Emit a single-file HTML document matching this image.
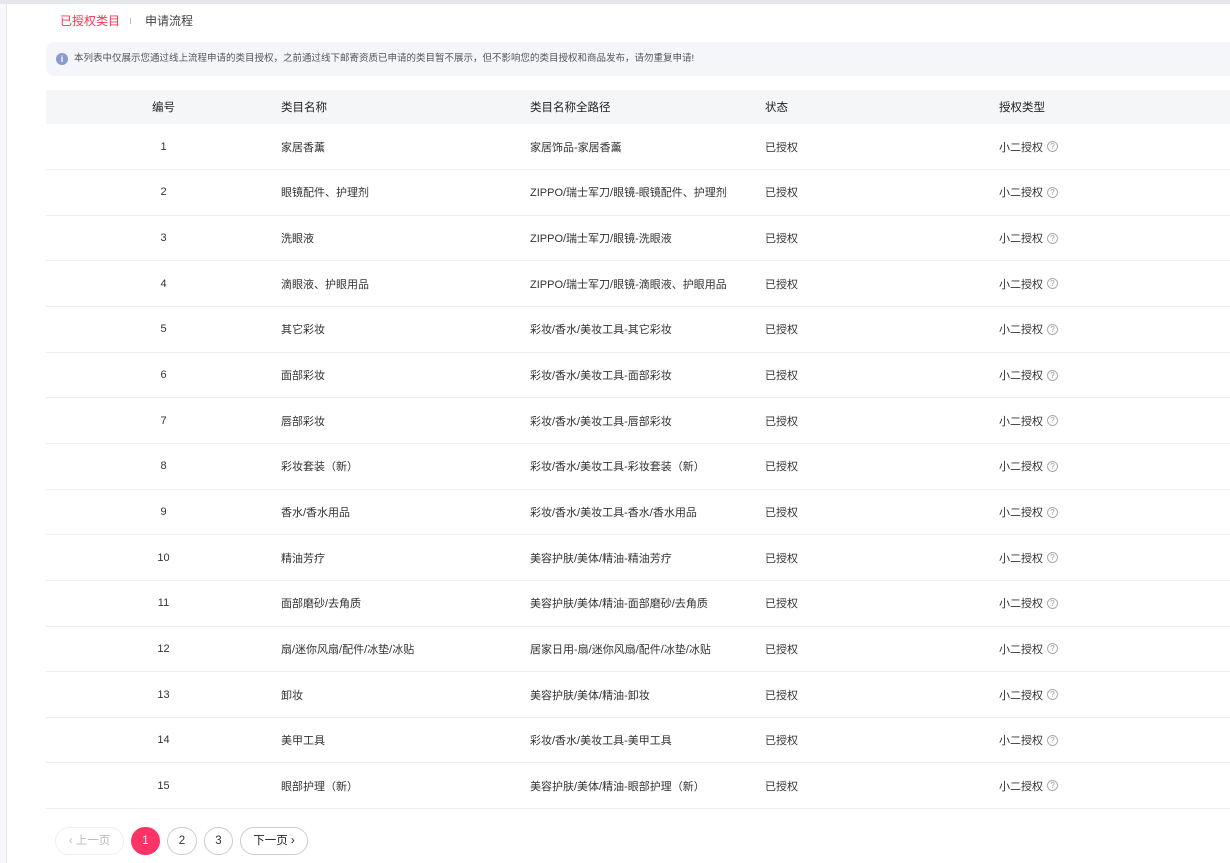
<!DOCTYPE html>
<html><head><meta charset="utf-8"><style>
*{margin:0;padding:0;box-sizing:border-box}
body{width:1230px;height:863px;overflow:hidden;background:#fff;font-family:"Liberation Sans","Noto Sans CJK SC",sans-serif;color:#333;font-size:12px;position:relative}
.topline{position:absolute;left:0;top:0;width:1230px;height:4px;background:#e6e7eb}
.leftline{position:absolute;left:0;top:4px;width:7px;height:859px;background:#f7f8fa;border-right:1px solid #e6e8ee}
.tab{position:absolute;top:13px;font-size:12px;line-height:16px}
.notice{position:absolute;left:46px;top:42px;width:1190px;height:34px;background:#f5f6fa;border-radius:8px;font-size:9.5px;color:#555;line-height:34px;padding-left:28px}
.notice i{position:absolute;left:10px;top:11px;width:12px;height:12px;border-radius:50%;background:#8a9bd0;color:#fff;font-style:normal;font-size:9px;line-height:12px;text-align:center;font-weight:bold}
table{position:absolute;left:46px;top:90px;width:1190px;border-collapse:collapse}
th{background:#f5f6f8;height:34px;font-weight:normal;text-align:left;font-size:11.5px;color:#222}
td{height:45.65px;border-bottom:1px solid #eceef2;font-size:11px;color:#333}
th:first-child,td:first-child{text-align:center;width:235px}
.c2{width:249px}.c3{width:235px}.c4{width:234px}
.q{display:inline-block;width:11px;height:11px;border:1px solid #aaa;border-radius:50%;font-size:8px;line-height:9px;text-align:center;color:#999;margin-left:4px;vertical-align:middle;position:relative;top:-1px}
.pg{position:absolute;top:827px;height:28px;border:1px solid #ccc;border-radius:14px;text-align:center;line-height:26px;font-size:11.5px}
</style></head><body>
<div class="topline"></div><div class="leftline"></div>
<div class="tab" style="left:60px;color:#ff3355">已授权类目</div>
<div style="position:absolute;left:130px;top:18px;width:1px;height:6px;background:#bbb"></div>
<div class="tab" style="left:145px;color:#444">申请流程</div>
<div class="notice"><i>i</i>本列表中仅展示您通过线上流程申请的类目授权，之前通过线下邮寄资质已申请的类目暂不展示，但不影响您的类目授权和商品发布，请勿重复申请!</div>
<table>
<tr><th>编号</th><th class="c2">类目名称</th><th class="c3">类目名称全路径</th><th class="c4">状态</th><th>授权类型</th></tr>
<tr><td>1</td><td>家居香薰</td><td>家居饰品-家居香薰</td><td>已授权</td><td>小二授权<span class="q">?</span></td></tr>
<tr><td>2</td><td>眼镜配件、护理剂</td><td>ZIPPO/瑞士军刀/眼镜-眼镜配件、护理剂</td><td>已授权</td><td>小二授权<span class="q">?</span></td></tr>
<tr><td>3</td><td>洗眼液</td><td>ZIPPO/瑞士军刀/眼镜-洗眼液</td><td>已授权</td><td>小二授权<span class="q">?</span></td></tr>
<tr><td>4</td><td>滴眼液、护眼用品</td><td>ZIPPO/瑞士军刀/眼镜-滴眼液、护眼用品</td><td>已授权</td><td>小二授权<span class="q">?</span></td></tr>
<tr><td>5</td><td>其它彩妆</td><td>彩妆/香水/美妆工具-其它彩妆</td><td>已授权</td><td>小二授权<span class="q">?</span></td></tr>
<tr><td>6</td><td>面部彩妆</td><td>彩妆/香水/美妆工具-面部彩妆</td><td>已授权</td><td>小二授权<span class="q">?</span></td></tr>
<tr><td>7</td><td>唇部彩妆</td><td>彩妆/香水/美妆工具-唇部彩妆</td><td>已授权</td><td>小二授权<span class="q">?</span></td></tr>
<tr><td>8</td><td>彩妆套装（新）</td><td>彩妆/香水/美妆工具-彩妆套装（新）</td><td>已授权</td><td>小二授权<span class="q">?</span></td></tr>
<tr><td>9</td><td>香水/香水用品</td><td>彩妆/香水/美妆工具-香水/香水用品</td><td>已授权</td><td>小二授权<span class="q">?</span></td></tr>
<tr><td>10</td><td>精油芳疗</td><td>美容护肤/美体/精油-精油芳疗</td><td>已授权</td><td>小二授权<span class="q">?</span></td></tr>
<tr><td>11</td><td>面部磨砂/去角质</td><td>美容护肤/美体/精油-面部磨砂/去角质</td><td>已授权</td><td>小二授权<span class="q">?</span></td></tr>
<tr><td>12</td><td>扇/迷你风扇/配件/冰垫/冰贴</td><td>居家日用-扇/迷你风扇/配件/冰垫/冰贴</td><td>已授权</td><td>小二授权<span class="q">?</span></td></tr>
<tr><td>13</td><td>卸妆</td><td>美容护肤/美体/精油-卸妆</td><td>已授权</td><td>小二授权<span class="q">?</span></td></tr>
<tr><td>14</td><td>美甲工具</td><td>彩妆/香水/美妆工具-美甲工具</td><td>已授权</td><td>小二授权<span class="q">?</span></td></tr>
<tr><td>15</td><td>眼部护理（新）</td><td>美容护肤/美体/精油-眼部护理（新）</td><td>已授权</td><td>小二授权<span class="q">?</span></td></tr>
</table>
<div class="pg" style="left:55px;width:69px;color:#bbb;border-color:#eee">‹ 上一页</div>
<div class="pg" style="left:131px;width:29px;background:#ff3366;border-color:#ff3366;color:#fff">1</div>
<div class="pg" style="left:167px;width:30px">2</div>
<div class="pg" style="left:204px;width:29px">3</div>
<div class="pg" style="left:240px;width:68px;color:#222">下一页 ›</div>
</body></html>
